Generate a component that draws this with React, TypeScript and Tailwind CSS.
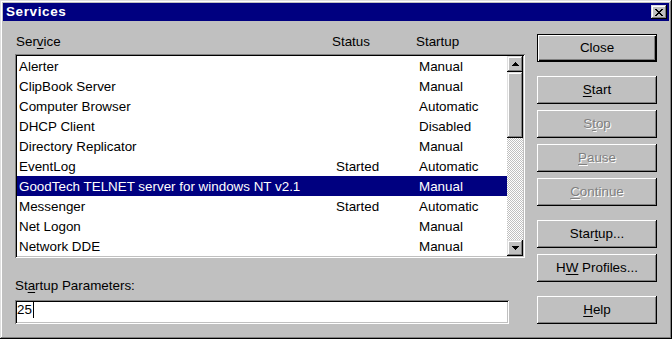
import React from "react";

const raised =
  "shadow-[inset_-1px_-1px_0_#000,inset_1px_1px_0_#fff,inset_-2px_-2px_0_#808080]";
const raisedSb =
  "shadow-[inset_-1px_-1px_0_#000,inset_1px_1px_0_#dfdfdf,inset_-2px_-2px_0_#808080,inset_2px_2px_0_#fff]";
const sunken =
  "shadow-[inset_1px_1px_0_#808080,inset_-1px_-1px_0_#fff,inset_2px_2px_0_#000,inset_-2px_-2px_0_#c0c0c0]";

type Row = { name: string; status: string; startup: string; sel?: boolean };
const rows: Row[] = [
  { name: "Alerter", status: "", startup: "Manual" },
  { name: "ClipBook Server", status: "", startup: "Manual" },
  { name: "Computer Browser", status: "", startup: "Automatic" },
  { name: "DHCP Client", status: "", startup: "Disabled" },
  { name: "Directory Replicator", status: "", startup: "Manual" },
  { name: "EventLog", status: "Started", startup: "Automatic" },
  { name: "GoodTech TELNET server for windows NT v2.1", status: "", startup: "Manual", sel: true },
  { name: "Messenger", status: "Started", startup: "Automatic" },
  { name: "Net Logon", status: "", startup: "Manual" },
  { name: "Network DDE", status: "", startup: "Manual" },
];

function U({ children }: { children: React.ReactNode }) {
  return <span className="underline decoration-1 underline-offset-[2px]">{children}</span>;
}

function Btn({
  children,
  disabled,
  def,
  className = "",
}: {
  children: React.ReactNode;
  disabled?: boolean;
  def?: boolean;
  className?: string;
}) {
  const bevel = def
    ? "shadow-[inset_0_0_0_1px_#000,inset_2px_2px_0_#fff,inset_-2px_-2px_0_#000,inset_-3px_-3px_0_#808080]"
    : raised;
  const txt = disabled ? "text-[#808080] [text-shadow:1px_1px_0_#fff]" : "text-black";
  return (
    <div
      className={`h-[28px] w-[120px] flex items-center justify-center bg-[#c0c0c0] ${bevel} ${txt} ${className}`}
    >
      <span className="leading-[16px]">{children}</span>
    </div>
  );
}

function Arrow({ down }: { down?: boolean }) {
  return (
    <svg width="7" height="4" viewBox="0 0 7 4" shapeRendering="crispEdges">
      {down ? (
        <g fill="#000">
          <rect x="0" y="0" width="7" height="1" />
          <rect x="1" y="1" width="5" height="1" />
          <rect x="2" y="2" width="3" height="1" />
          <rect x="3" y="3" width="1" height="1" />
        </g>
      ) : (
        <g fill="#000">
          <rect x="3" y="0" width="1" height="1" />
          <rect x="2" y="1" width="3" height="1" />
          <rect x="1" y="2" width="5" height="1" />
          <rect x="0" y="3" width="7" height="1" />
        </g>
      )}
    </svg>
  );
}

function XGlyph() {
  const cells: [number, number][] = [
    [0, 0], [1, 0], [6, 0], [7, 0],
    [1, 1], [2, 1], [5, 1], [6, 1],
    [2, 2], [3, 2], [4, 2], [5, 2],
    [3, 3], [4, 3],
    [2, 4], [3, 4], [4, 4], [5, 4],
    [1, 5], [2, 5], [5, 5], [6, 5],
    [0, 6], [1, 6], [6, 6], [7, 6],
  ];
  return (
    <svg width="8" height="7" viewBox="0 0 8 7" shapeRendering="crispEdges">
      {cells.map(([x, y], i) => (
        <rect key={i} x={x} y={y} width="1" height="1" fill="#000" />
      ))}
    </svg>
  );
}

export default function App() {
  return (
    <div className="w-[672px] h-[339px] bg-[#c0c0c0] p-[3px] flex flex-col shadow-[inset_-1px_-1px_0_#000,inset_1px_1px_0_#dfdfdf,inset_-2px_-2px_0_#808080,inset_2px_2px_0_#fff] font-['Liberation_Sans',Arial,sans-serif] text-[13.4px] text-black overflow-hidden">
      {/* Title bar */}
      <div className="h-[18px] bg-[#000080] flex items-center justify-between pl-[3px] pr-[2px]">
        <span className="text-white font-bold text-[13.5px] tracking-[0.6px] leading-[18px]">Services</span>
        <div className={`w-[16px] h-[14px] bg-[#c0c0c0] flex items-center justify-center ${raisedSb}`}>
          <XGlyph />
        </div>
      </div>

      {/* Client */}
      <div className="flex flex-row">
        {/* Left column */}
        <div className="ml-[12px] w-[510px] flex flex-col">
          <div className="mt-[11px] h-[20px] grid grid-cols-[316px_84px_1fr] pl-[1px] leading-[20px]">
            <span>
              Ser<U>v</U>ice
            </span>
            <span>Status</span>
            <span>Startup</span>
          </div>
          <div className={`mt-[2px] h-[204px] bg-white p-[2px] flex flex-row ${sunken}`}>
            <div className="flex-1 flex flex-col">
              {rows.map((r) => (
                <div
                  key={r.name}
                  className={`h-[20px] grid grid-cols-[317px_83px_1fr] pl-[2px] pt-[1px] leading-[20px] whitespace-nowrap ${
                    r.sel ? "bg-[#000080] text-white" : ""
                  }`}
                >
                  <span>{r.name}</span>
                  <span>{r.status}</span>
                  <span>{r.startup}</span>
                </div>
              ))}
            </div>
            <div className="w-[16px] flex flex-col">
              <div className={`h-[16px] bg-[#c0c0c0] flex items-center justify-center ${raisedSb}`}>
                <Arrow />
              </div>
              <div className={`h-[66px] bg-[#c0c0c0] ${raisedSb}`} />
              <div className="flex-1 bg-[image:conic-gradient(#c0c0c0_25%,#fff_0_50%,#c0c0c0_0_75%,#fff_0)] bg-[length:2px_2px]" />
              <div className={`h-[16px] bg-[#c0c0c0] flex items-center justify-center ${raisedSb}`}>
                <Arrow down />
              </div>
            </div>
          </div>
          <div className="mt-[18px] h-[20px] leading-[20px]">
            St<U>a</U>rtup Parameters:
          </div>
          <div className={`mt-[4px] w-[494px] h-[24px] bg-white pl-[2px] pt-[1px] flex items-start ${sunken}`}>
            <span className="leading-[15px] mt-[1px]">25</span>
            <span className="inline-block w-px h-[16px] bg-black ml-[1px] mt-[1px]" />
          </div>
        </div>

        {/* Right column */}
        <div className="ml-[12px] mt-[13px] flex flex-col">
          <Btn def>Close</Btn>
          <Btn className="mt-[14px]">
            <U>S</U>tart
          </Btn>
          <Btn className="mt-[6px]" disabled>
            S<U>t</U>op
          </Btn>
          <Btn className="mt-[6px]" disabled>
            <U>P</U>ause
          </Btn>
          <Btn className="mt-[6px]" disabled>
            <U>C</U>ontinue
          </Btn>
          <Btn className="mt-[14px]">
            Star<U>t</U>up...
          </Btn>
          <Btn className="mt-[6px]">
            H<U>W</U> Profiles...
          </Btn>
          <Btn className="mt-[14px]">
            <U>H</U>elp
          </Btn>
        </div>
      </div>
    </div>
  );
}
